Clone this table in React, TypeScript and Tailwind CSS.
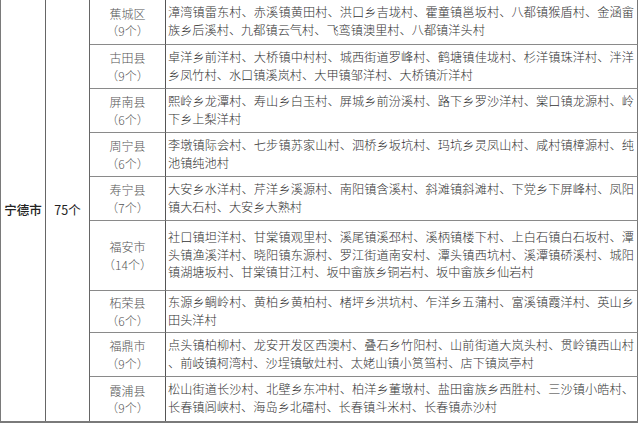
import React from "react";

type District = { name: string; count: string; lines: string[] };

const districts: District[] = [
  {
    name: "蕉城区",
    count: "（9个）",
    lines: [
      "漳湾镇雷东村、赤溪镇黄田村、洪口乡吉垅村、霍童镇邕坂村、八都镇猴盾村、金涵畲",
      "族乡后溪村、九都镇云气村、飞鸾镇澳里村、八都镇洋头村",
    ],
  },
  {
    name: "古田县",
    count: "（9个）",
    lines: [
      "卓洋乡前洋村、大桥镇中村村、城西街道罗峰村、鹤塘镇佳垅村、杉洋镇珠洋村、泮洋",
      "乡凤竹村、水口镇溪岚村、大甲镇邹洋村、大桥镇沂洋村",
    ],
  },
  {
    name: "屏南县",
    count: "（6个）",
    lines: [
      "熙岭乡龙潭村、寿山乡白玉村、屏城乡前汾溪村、路下乡罗沙洋村、棠口镇龙源村、岭",
      "下乡上梨洋村",
    ],
  },
  {
    name: "周宁县",
    count: "（6个）",
    lines: [
      "李墩镇际会村、七步镇苏家山村、泗桥乡坂坑村、玛坑乡灵凤山村、咸村镇樟源村、纯",
      "池镇纯池村",
    ],
  },
  {
    name: "寿宁县",
    count: "（7个）",
    lines: [
      "大安乡水洋村、芹洋乡溪源村、南阳镇含溪村、斜滩镇斜滩村、下党乡下屏峰村、凤阳",
      "镇大石村、大安乡大熟村",
    ],
  },
  {
    name: "福安市",
    count: "（14个）",
    lines: [
      "社口镇坦洋村、甘棠镇观里村、溪尾镇溪邳村、溪柄镇楼下村、上白石镇白石坂村、潭",
      "头镇渔溪洋村、晓阳镇东源村、罗江街道南安村、潭头镇西坑村、溪潭镇硚溪村、城阳",
      "镇湖塘坂村、甘棠镇甘江村、坂中畲族乡铜岩村、坂中畲族乡仙岩村",
    ],
  },
  {
    name: "柘荣县",
    count: "（6个）",
    lines: [
      "东源乡鲷岭村、黄柏乡黄柏村、楮坪乡洪坑村、乍洋乡五蒲村、富溪镇霞洋村、英山乡",
      "田头洋村",
    ],
  },
  {
    name: "福鼎市",
    count: "（9个）",
    lines: [
      "点头镇柏柳村、龙安开发区西澳村、叠石乡竹阳村、山前街道大岚头村、贯岭镇西山村",
      "、前岐镇柯湾村、沙埕镇敏灶村、太姥山镇小筼筜村、店下镇岚亭村",
    ],
  },
  {
    name: "霞浦县",
    count: "（9个）",
    lines: [
      "松山街道长沙村、北壁乡东冲村、柏洋乡董墩村、盐田畲族乡西胜村、三沙镇小皓村、",
      "长春镇闾峡村、海岛乡北礌村、长春镇斗米村、长春镇赤沙村",
    ],
  },
];

const font = { fontFamily: '"Noto Sans CJK SC", "Liberation Serif", serif' };

export default function App() {
  return (
    <div className="h-[424px] w-[640px] overflow-hidden bg-white" style={font}>
      <div className="grid w-[638px] grid-cols-[45px_44px_76px_472px] grid-rows-[45px_44px_44px_44px_44px_70px_42px_44px_44px] border-b-2 border-l border-[#7a7a7a]">
        <div className="row-span-9 flex items-center justify-center border-r border-[#666] text-[12.5px] font-medium text-[#222]">
          宁德市
        </div>
        <div className="row-span-9 flex items-center justify-center border-r border-[#666] text-[12.5px] text-[#222]">
          75个
        </div>
        {districts.map((d, i) => {
          const last = i === districts.length - 1;
          return (
            <React.Fragment key={d.name}>
              <div
                className={`flex flex-col items-center justify-center border-r border-[#555] text-[12px] font-light leading-[17.5px] text-[#555] ${
                  last ? "" : "border-b border-b-[#8a8a8a]"
                }`}
              >
                <div>{d.name}</div>
                <div>{d.count}</div>
              </div>
              <div
                className={`flex flex-col justify-center border-r border-[#777] pl-[2px] pr-[3px] text-[12.2px] font-light leading-[17.7px] text-[#333] ${
                  last ? "" : "border-b border-b-[#8a8a8a]"
                }`}
              >
                {d.lines.map((l, j) =>
                  j < d.lines.length - 1 ? (
                    <div key={j} className="whitespace-nowrap text-justify [text-align-last:justify]">
                      {l}
                    </div>
                  ) : (
                    <div key={j} className="whitespace-nowrap">
                      {l}
                    </div>
                  ),
                )}
              </div>
            </React.Fragment>
          );
        })}
      </div>
    </div>
  );
}
